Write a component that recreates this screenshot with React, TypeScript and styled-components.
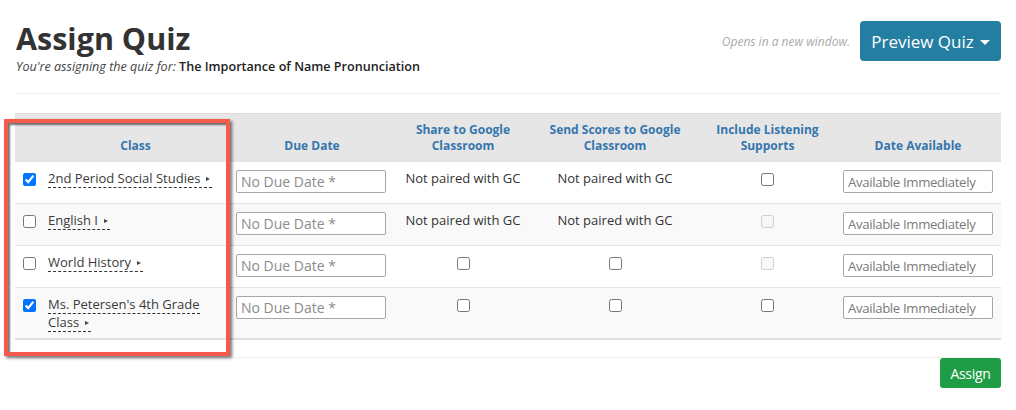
import styled, { createGlobalStyle } from 'styled-components';

const GlobalStyle = createGlobalStyle`
  body {
    margin: 0;
    background: #fff;
    font-family: "Open Sans", "Liberation Sans", sans-serif;
    color: #333;
  }
`;

const Page = styled.div`
  padding: 20px 15px 0 15px;
`;

const TopBar = styled.div`
  display: flex;
  justify-content: space-between;
  align-items: flex-start;
`;

const Title = styled.h1`
  margin: 0;
  font-size: 30.5px;
  line-height: 36px;
  font-weight: 700;
  color: #333;
  padding-left: 1px;
`;

const Subtitle = styled.div`
  margin-top: 2px;
  font-size: 12.6px;
  line-height: 18px;
  padding-left: 1px;

  em {
    font-style: italic;
    color: #444;
  }

  strong {
    font-weight: 600;
    color: #222;
  }
`;

const PreviewArea = styled.div`
  display: flex;
  align-items: center;
  gap: 10px;
  padding-top: 1px;
`;

const Hint = styled.span`
  font-size: 12px;
  font-style: italic;
  color: #aaa;
`;

const PreviewButton = styled.button`
  display: flex;
  align-items: center;
  gap: 6px;
  height: 40px;
  width: 141px;
  justify-content: center;
  border: none;
  border-radius: 4px;
  background: #237ea1;
  color: #fff;
  font-family: inherit;
  font-size: 17px;
  cursor: pointer;
`;

const Caret = styled.span`
  width: 0;
  height: 0;
  border-left: 5px solid transparent;
  border-right: 5px solid transparent;
  border-top: 5px solid #fff;
  margin-top: 2px;
`;

const Divider = styled.hr<{ $mt: number }>`
  border: none;
  border-top: 1px solid #f0f0f0;
  margin: ${(p) => p.$mt}px 0 0 0;
`;

const TableWrap = styled.div`
  position: relative;
  margin-top: 19px;
`;

const Table = styled.table`
  width: 100%;
  border-collapse: collapse;
  border-top: 1px solid #ddd;
  border-bottom: 2px solid #e0e0e0;
`;

const Th = styled.th<{ $pl?: number }>`
  background: #e6e6e6;
  color: #3576ad;
  font-size: 12px;
  font-weight: 700;
  line-height: 16px;
  height: 48px;
  text-align: center;
  vertical-align: bottom;
  padding: 0 8px 7px ${(p) => p.$pl ?? 8}px;
  box-sizing: border-box;
`;

const Tr = styled.tr<{ $striped: boolean }>`
  height: 42px;
  background: ${(p) => (p.$striped ? '#f9f9f9' : '#fff')};
  border-top: 1px solid #e4e4e4;
`;

const Td = styled.td<{ $center?: boolean }>`
  vertical-align: top;
  padding: 7px 8px;
  font-size: 13px;
  line-height: 18px;
  color: #333;
  text-align: ${(p) => (p.$center ? 'center' : 'left')};
`;

const ClassCell = styled.div`
  display: flex;
  align-items: flex-start;
  gap: 12px;
`;

const Check = styled.input`
  margin: 4px 0 0 0;
  width: 13px;
  height: 13px;
`;

const ClassName = styled.span`
  font-size: 13px;
  color: #3a3a3a;
  border-bottom: 1px dashed #333;
  line-height: 18px;
`;

const Arrow = styled.span`
  display: inline-block;
  width: 0;
  height: 0;
  border-top: 2.5px solid transparent;
  border-bottom: 2.5px solid transparent;
  border-left: 4px solid #444;
  margin-left: 6px;
  margin-right: 2px;
  vertical-align: 2px;
`;

const TextInput = styled.input<{ $condensed?: boolean }>`
  box-sizing: border-box;
  width: 150px;
  height: 23px;
  margin-top: 1px;
  border: 1px solid #a6a6a6;
  border-radius: 2px;
  padding: 0 4px;
  font-family: inherit;
  font-size: ${(p) => (p.$condensed ? '13.2px' : '14px')};
  letter-spacing: ${(p) => (p.$condensed ? '-0.35px' : '0')};
  color: #555;

  &::placeholder {
    color: ${(p) => (p.$condensed ? '#7a7a7a' : '#8c8c8c')};
  }
`;

const Highlight = styled.div`
  position: absolute;
  left: -11px;
  top: 6px;
  width: 226px;
  height: 237px;
  box-sizing: border-box;
  border: 4px solid #f45b4d;
  box-shadow: 2px 2px 3px rgba(0, 0, 0, 0.55), inset 2px 2px 2px rgba(0, 0, 0, 0.55);
  pointer-events: none;
`;

const Footer = styled.div`
  display: flex;
  justify-content: flex-end;
`;

const AssignButton = styled.button`
  height: 30px;
  width: 61px;
  border: none;
  border-radius: 3px;
  background: #1f9d46;
  color: #fff;
  font-family: inherit;
  font-size: 14px;
  letter-spacing: -0.3px;
  cursor: pointer;
`;

type Row = {
  name: string;
  checked: boolean;
  paired: boolean;
  listeningDisabled: boolean;
};

const rows: Row[] = [
  { name: '2nd Period Social Studies', checked: true, paired: false, listeningDisabled: false },
  { name: 'English I', checked: false, paired: false, listeningDisabled: true },
  { name: 'World History', checked: false, paired: true, listeningDisabled: true },
  { name: "Ms. Petersen's 4th Grade Class", checked: true, paired: true, listeningDisabled: false },
];

export default function App() {
  return (
    <>
      <GlobalStyle />
      <Page>
        <TopBar>
          <div>
            <Title>Assign Quiz</Title>
            <Subtitle>
              <em>You're assigning the quiz for:</em> <strong>The Importance of Name Pronunciation</strong>
            </Subtitle>
          </div>
          <PreviewArea>
            <Hint>Opens in a new window.</Hint>
            <PreviewButton>
              Preview Quiz <Caret />
            </PreviewButton>
          </PreviewArea>
        </TopBar>

        <Divider $mt={17} />

        <TableWrap>
          <Table>
            <colgroup>
              <col style={{ width: 213 }} />
              <col style={{ width: 168 }} />
              <col style={{ width: 134 }} />
              <col style={{ width: 170 }} />
              <col style={{ width: 135 }} />
              <col />
            </colgroup>
            <thead>
              <tr>
                <Th $pl={36}>Class</Th>
                <Th>Due Date</Th>
                <Th>Share to Google Classroom</Th>
                <Th>Send Scores to Google Classroom</Th>
                <Th>Include Listening Supports</Th>
                <Th>Date Available</Th>
              </tr>
            </thead>
            <tbody>
              {rows.map((r, i) => (
                <Tr key={r.name} $striped={i % 2 === 1}>
                  <Td>
                    <ClassCell>
                      <Check type="checkbox" defaultChecked={r.checked} />
                      <div>
                        <ClassName>
                          {r.name}
                          <Arrow />
                        </ClassName>
                      </div>
                    </ClassCell>
                  </Td>
                  <Td>
                    <TextInput placeholder="No Due Date *" />
                  </Td>
                  <Td $center>{r.paired ? <Check type="checkbox" /> : 'Not paired with GC'}</Td>
                  <Td $center>{r.paired ? <Check type="checkbox" /> : 'Not paired with GC'}</Td>
                  <Td $center>
                    <Check type="checkbox" disabled={r.listeningDisabled} />
                  </Td>
                  <Td>
                    <TextInput $condensed placeholder="Available Immediately" />
                  </Td>
                </Tr>
              ))}
            </tbody>
          </Table>
          <Highlight />
        </TableWrap>

        <Divider $mt={17} />
        <Footer>
          <AssignButton>Assign</AssignButton>
        </Footer>
      </Page>
    </>
  );
}
